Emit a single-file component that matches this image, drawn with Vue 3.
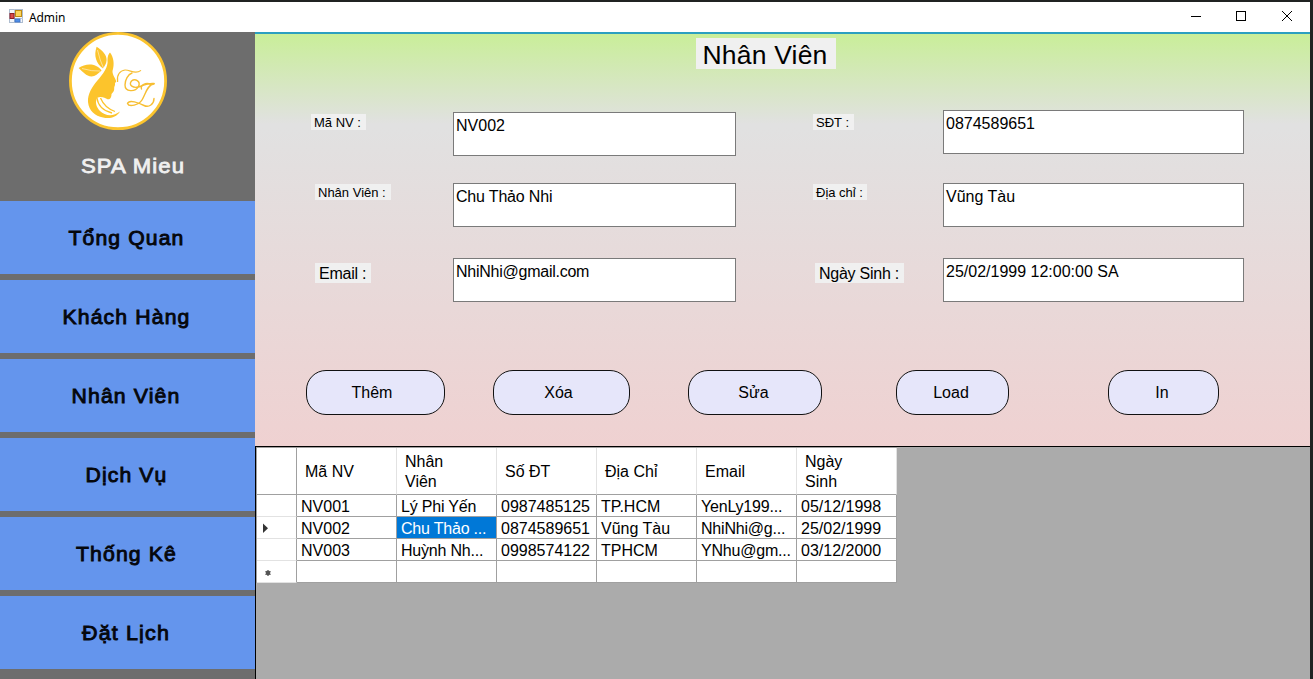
<script setup>
const menu = [
  { text: 'Tổng Quan', width: 116, x: 98.5 },
  { text: 'Khách Hàng', width: 128, x: 98.5 },
  { text: 'Nhân Viên', width: 109, x: 98 },
  { text: 'Dịch Vụ', width: 82, x: 98.5 },
  { text: 'Thống Kê', width: 101, x: 98.5 },
  { text: 'Đặt Lịch', width: 88, x: 98 },
]
const fields = [
  { label: 'Mã NV :', value: 'NV002', cls: 'ma' },
  { label: 'SĐT :', value: '0874589651', cls: 'sdt' },
  { label: 'Nhân Viên :', value: 'Chu Thảo Nhi', cls: 'ten' },
  { label: 'Địa chỉ :', value: 'Vũng Tàu', cls: 'dc' },
  { label: 'Email :', value: 'NhiNhi@gmail.com', cls: 'email' },
  { label: 'Ngày Sinh :', value: '25/02/1999 12:00:00 SA', cls: 'ns' },
]
const actions = ['Thêm', 'Xóa', 'Sửa', 'Load', 'In']
const heads = ['Mã NV', 'Nhân Viên', 'Số ĐT', 'Địa Chỉ', 'Email', 'Ngày Sinh']
const rows = [
  ['NV001', 'Lý Phi Yến', '0987485125', 'TP.HCM', 'YenLy199...', '05/12/1998'],
  ['NV002', 'Chu Thảo ...', '0874589651', 'Vũng Tàu', 'NhiNhi@g...', '25/02/1999'],
  ['NV003', 'Huỳnh Nh...', '0998574122', 'TPHCM', 'YNhu@gm...', '03/12/2000'],
  ['', '', '', '', '', ''],
]
</script>

<template>
  <div class="screen">
    <div class="window">
      <header class="titlebar">
        <svg class="app-icon" width="14" height="14" viewBox="0 0 14 14">
          <rect x=".5" y=".5" width="13" height="13" fill="#f4f6fa" stroke="#aebdd0" />
          <path d="M5.5 0V14M0 9.5H14" stroke="#b9c6d6" />
          <rect x="1" y="4.5" width="4" height="5" fill="#d84a4a" stroke="#8d1f24" />
          <rect x="6.5" y="1.5" width="6" height="6" fill="#fbd45a" stroke="#bf8b13" />
          <rect x="6" y="10" width="5" height="3" fill="#4f8fe8" stroke="#3d6fc4" stroke-width=".8" />
        </svg>
        <span class="app-name">Admin</span>
        <svg class="controls" width="104" height="12" viewBox="0 0 104 12" fill="none" stroke="#000">
          <path d="M0 6.5H10" />
          <rect x="45.5" y="1.5" width="9" height="9" />
          <path d="M91 1L101 11M101 1L91 11" />
        </svg>
      </header>
      <div class="body">
        <aside class="sidebar">
          <svg class="logo" width="98" height="98" viewBox="0 0 98 98">
            <circle cx="49" cy="49" r="47.6" fill="#fff" stroke="#fbc42e" stroke-width="2.8" />
            <g fill="#fcc42c">
              <path d="M27.600 14.700C33 18 38 23 37.600 28C37.500 32 35.500 34 34 36.500C27 31 24.500 24 27.600 14.700Z" />
              <path d="M9.600 36C17 31 27 31 32.600 38.600C29 42 26 44.500 22.600 44.600C17 44 14 40 9.600 36Z" />
              <path d="M41 20.600C44.500 25 45.800 32 43.500 39C43.300 43 46.500 46 47.300 49.500C47 50.500 45.800 50.500 46 52C46.400 53.500 45 54.500 45.200 56C45.500 59 44 60.500 42.500 62C42.500 65 41.500 67.500 38.500 67.300C36 66 32 63.500 28 66C26 70 27 75 31 79C36 84 44 85 51 79.600C47 86 40 87 34 85.500C26 84 20 79 19 70C18.500 62 23 55 28 49C34 42 39.500 35 38.500 28C38.400 25 39.500 22 41 20.600Z" />
            </g>
            <g fill="none" stroke="#fcc42c" stroke-width="1.300">
              <path d="M28 66C29 74 35 79 43 81" />
              <path d="M31.500 66C34 72 39 77 46 79.500" />
            </g>
            <path d="M28.500 18Q31 29 34.500 36M13 36.500Q23 39.500 31 39" fill="none" stroke="#fff" stroke-width=".5" />
            <g fill="none" stroke="#f7be32" stroke-width="1.200" stroke-linecap="round">
              <path d="M48.600 49.500C47.500 43 51 38.500 56 38C61 37.600 66 43 71.600 38.600" />
              <path d="M63 41C59 42.500 56 48 56 53C56 60 66 60.500 69.500 54.500C72 49 66 46 62.500 49C59 53 64 57 71 54.500C76 53 80 50.500 85 51.500" stroke-width="1.400" />
              <path d="M72.500 57C71 53 77 50 82 52.500C85 53 86 51 84 52C78 54 77 61 73 68C70 73 60 75.500 58.500 71.500C60 67 70 71 75 73.500C80 76 85 72 85 66.500" stroke-width="1.400" />
            </g>
          </svg>
          <svg class="brand" width="120" height="30" viewBox="0 0 120 30">
            <text x="11" y="22" textLength="104" lengthAdjust="spacingAndGlyphs">SPA Mieu</text>
          </svg>
          <nav>
            <button v-for="m in menu" :key="m.text" class="nav-btn">
              <svg class="nav-label" width="200" height="36" viewBox="0 0 200 36">
                <text :x="m.x" y="25" text-anchor="middle" lengthAdjust="spacingAndGlyphs" :textLength="m.width">{{ m.text }}</text>
              </svg>
            </button>
          </nav>
        </aside>
        <main class="main">
          <section class="form-panel">
            <h1>Nhân Viên</h1>
            <div class="form">
              <div v-for="f in fields" :key="f.label" class="field" :class="f.cls">
                <div class="label-cell"><label>{{ f.label }}</label></div>
                <div class="input">{{ f.value }}</div>
              </div>
            </div>
            <div class="actions">
              <button v-for="(a, i) in actions" :key="a" :class="'act' + i">{{ a }}</button>
            </div>
          </section>
          <section class="grid-area">
            <div class="table">
              <div class="tr head">
                <div class="rh"></div>
                <div v-for="h in heads" :key="h" class="th">{{ h }}</div>
              </div>
              <div v-for="(r, i) in rows" :key="i" class="tr">
                <div class="rh">
                  <svg v-if="i === 1" width="12" height="13" viewBox="0 0 12 13"><path d="M1 1.500L6 6.250L1 11Z" fill="#333" /></svg>
                  <svg v-if="i === 3" width="12" height="12" viewBox="0 0 12 12"><circle cx="6" cy="7" r="2.400" fill="#555" /><path d="M6 4V10M3.400 5.500L8.600 8.500M8.600 5.500L3.400 8.500" stroke="#555" stroke-width="1" /></svg>
                </div>
                <div v-for="(c, j) in r" :key="j" class="td" :class="['col' + j, { selected: i === 1 && j === 1 }]">{{ c }}</div>
              </div>
            </div>
          </section>
        </main>
      </div>
    </div>
  </div>
</template>

<style>
html, body { margin: 0; overflow: hidden; }
</style>

<style scoped>
* { box-sizing: border-box; }
.screen {
  width: 1313px; height: 679px; padding: 2px 3px 0 0; overflow: hidden;
  background: #202322; color: #000;
  font-family: "Liberation Sans", Arial, sans-serif; font-size: 16px;
}
.window { height: 677px; display: flex; flex-direction: column; }
.titlebar { height: 30px; flex: none; background: #fff; display: flex; align-items: center; padding: 0 15px 2px 9px; }
.app-name { font: 12px "Noto Sans", sans-serif; letter-spacing: -.1px; margin-left: 6px; padding-top: 2px; flex: 1; }
.body { flex: 1; display: flex; min-height: 0; }
.sidebar { width: 255px; flex: none; background: #6d6d6d; display: flex; flex-direction: column; overflow: hidden; }
.logo { margin-left: 69px; flex: none; }
.brand { margin: 21px 0 0 70px; flex: none; }
.brand text { font-size: 20.5px; letter-spacing: 1px; fill: #f0f0f0; stroke: #f0f0f0; stroke-width: .8px; }
nav { display: flex; flex-direction: column; gap: 6px; margin-top: 20px; }
button { font-family: inherit; padding: 0; }
.nav-btn { height: 73px; flex: none; border: 0; background: #6495ed; display: flex; align-items: center; justify-content: center; }
.nav-label text { font: 400 20.5px "Liberation Sans", Arial, sans-serif; letter-spacing: 1.1px; fill: #05070c; stroke: #05070c; stroke-width: .9px; }
.main { flex: 1; display: flex; flex-direction: column; min-width: 0; }
.form-panel {
  height: 414px; flex: none; border-top: 2px solid #2b9fc0;
  background: linear-gradient(#c9ee99 0, #e1e1e1 90px, #e1e1e1 94px, #efd1d1 412px);
}
h1 {
  margin: 4px 0 0 441px; width: 140px; height: 31px; line-height: 34px; background: #f0f0f0;
  padding-right: 2px; text-align: center; font-size: 26.5px; font-weight: 400; letter-spacing: .2px;
}
.form {
  height: 192px; margin: 41px 0 0 56px;
  display: grid; grid-template-columns: 425px 431px; column-gap: 77px;
  grid-template-rows: 73px 75px 44px; align-content: start;
}
.field { display: flex; align-items: flex-start; }
.label-cell { width: 142px; flex: none; padding-top: 4px; display: flex; }
.sdt .label-cell, .dc .label-cell, .ns .label-cell { width: 130px; }
label { background: #f0f0f0; height: 16px; line-height: 18px; padding-left: 3px; font-size: 13px; white-space: nowrap; }
.input { flex: 1; height: 44px; background: #fff; border: 1px solid #7a7a7a; padding: 3px 2px; line-height: 20px; white-space: nowrap; }
.ma .input { margin-top: 2px; }
.ten .input { letter-spacing: -.18px; }
.email .input { letter-spacing: -.25px; }
.ten .label-cell, .dc .label-cell { padding-top: 1px; }
.email .label-cell, .ns .label-cell { padding-top: 5px; }
.ma label { width: 55px; }
.ten label { width: 76px; margin-left: 4px; }
.email label { width: 56px; margin-left: 4px; }
.sdt label { width: 41px; }
.dc label { width: 54px; }
.ns label { width: 89px; margin-left: 2px; }
.email label, .ns label { font-size: 16px; height: 20px; line-height: 22px; padding-left: 4px; letter-spacing: -.25px; }
.actions { display: flex; padding-left: 51px; margin-top: 68px; }
.actions button {
  height: 45px; border: 1px solid #111; border-radius: 20px; background: #e6e6fa; color: #000;
  font-size: 16px; flex: none;
}
.actions .act0 { width: 139px; padding-right: 7px; }
.actions .act1 { width: 137px; margin-left: 48px; padding-right: 6px; }
.actions .act2 { width: 134px; margin-left: 58px; padding-right: 3px; }
.actions .act3 { width: 113px; margin-left: 74px; padding-right: 3px; }
.actions .act4 { width: 111px; margin-left: 99px; padding-right: 3px; }
.grid-area { flex: 1; background: #ababab; border: solid #000; border-width: 1px 0 0 1px; min-height: 0; }
.table { width: 641px; border: solid #a0a0a0; border-width: 1px 0 0 1px; }
.tr { display: flex; height: 22px; }
.tr.head { height: 47px; }
.rh, .th, .td { background: #fff; border: solid #a0a0a0; border-width: 0 1px 1px 0; width: 100px; flex: none; white-space: nowrap; overflow: hidden; }
.rh { width: 40px; border-bottom-color: #e2e2e2; padding: 5px 0 0 5px; line-height: 0; }
.head .rh, .th { border-bottom-color: #a0a0a0; }
.th { border-right-color: #e2e2e2; padding: 2px 30px 0 8px; display: flex; align-items: center; line-height: 20px; white-space: normal; }
.td { padding-left: 4px; line-height: 23px; }
.col1, .col4 { letter-spacing: -.2px; }
.selected { background: #0078d7; color: #fff; }
</style>
